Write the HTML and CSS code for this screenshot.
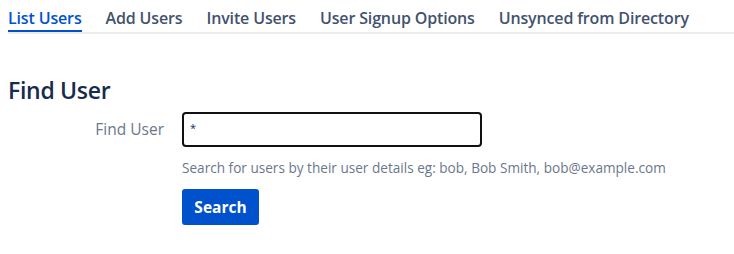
FILE: index.html
```html
<!DOCTYPE html>
<html lang="en">
<head>
<meta charset="utf-8">
<title>Find User</title>
<link rel="stylesheet" href="styles.css">
</head>
<body>
<nav class="tabs">
  <a class="tab tab-active">List Users</a>
  <a class="tab">Add Users</a>
  <a class="tab">Invite Users</a>
  <a class="tab">User Signup Options</a>
  <a class="tab">Unsynced from Directory</a>
</nav>
<main class="content">
  <h1 class="title">Find User</h1>
  <form class="form">
    <label class="label" for="q">Find User</label>
    <div class="field">
      <input id="q" class="input" type="text" value="*">
      <div class="hint">Search for users by their user details eg: bob, Bob Smith, bob@example.com</div>
      <button type="button" class="btn">Search</button>
    </div>
  </form>
</main>
</body>
</html>
```
FILE: styles.css
```css
html, body {
  margin: 0;
  padding: 0;
  background: #fff;
}
body {
  padding-left: 8px;
  font-family: "Open Sans", "Noto Sans", sans-serif;
  color: #172B4D;
}
.tabs {
  display: flex;
  gap: 24px;
  border-bottom: 2px solid #EBECF0;
  height: 32px;
}
.tab {
  display: block;
  padding-top: 6px;
  line-height: 24px;
  height: 26px;
  font-size: 16px;
  font-weight: 600;
  color: #42526E;
  white-space: nowrap;
  letter-spacing: -0.15px;
}
.tab-active {
  color: #0052CC;
  height: 24px;
  border-bottom: 2px solid #0052CC;
}
.content {
  padding-top: 40px;
}
.title {
  margin: 0;
  font-size: 23px;
  line-height: 32px;
  font-weight: 600;
  color: #172B4D;
  letter-spacing: -0.3px;
}
.form {
  margin-top: 6px;
  display: grid;
  grid-template-columns: 156px 1fr;
  column-gap: 18px;
  align-items: start;
}
.label {
  text-align: right;
  font-size: 15.5px;
  line-height: 35px;
  color: #6B778C;
}
.field {
  display: flex;
  flex-direction: column;
  align-items: flex-start;
}
.input {
  box-sizing: border-box;
  width: 300px;
  height: 35px;
  border: 2px solid #111;
  border-radius: 4px;
  padding: 0 6px 4px;
  font-family: inherit;
  font-size: 11px;
  color: #172B4D;
  outline: none;
}
.hint {
  margin-top: 12px;
  font-size: 13.6px;
  line-height: 18px;
  color: #6B778C;
}
.btn {
  margin-top: 12px;
  box-sizing: border-box;
  width: 77px;
  height: 36px;
  border: none;
  border-radius: 3px;
  background: #0052CC;
  color: #fff;
  font-family: inherit;
  font-size: 15.5px;
  font-weight: 700;
  padding: 0;
}
```
